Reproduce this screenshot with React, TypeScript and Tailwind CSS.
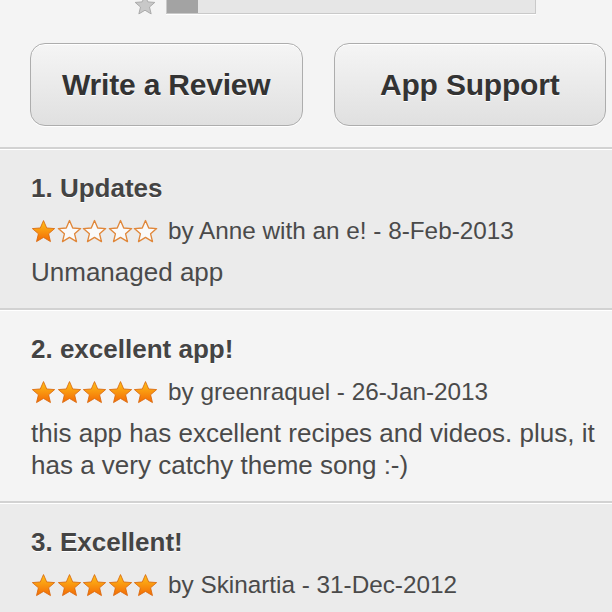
import React from "react"

type Review = {
  title: string
  rating: number
  author: string
  date: string
  body: string
}

const reviews: Review[] = [
  { title: "1. Updates", rating: 1, author: "Anne with an e!", date: "8-Feb-2013", body: "Unmanaged app" },
  {
    title: "2. excellent app!",
    rating: 5,
    author: "greenraquel",
    date: "26-Jan-2013",
    body: "this app has excellent recipes and videos. plus, it has a very catchy theme song :-)",
  },
  { title: "3. Excellent!", rating: 5, author: "Skinartia", date: "31-Dec-2012", body: "" },
]

const STAR = "M12 1.5l3.1 7.1 7.6.6-5.8 5 1.8 7.5L12 17.7l-6.7 4 1.8-7.5-5.8-5 7.6-.6z"

function Star({ filled, id }: { filled: boolean; id: string }) {
  return (
    <svg width="25" height="25" viewBox="0 0 24 24" className="shrink-0">
      <defs>
        <linearGradient id={id} x1="0" y1="0" x2="0" y2="1">
          <stop offset="0" stopColor="#ffc21a" />
          <stop offset="1" stopColor="#f36a05" />
        </linearGradient>
      </defs>
      {filled ? (
        <path d={STAR} fill={`url(#${id})`} stroke="#d8680c" strokeWidth="0.8" strokeLinejoin="round" />
      ) : (
        <path d={STAR} fill="#fafafa" stroke="#e0873a" strokeWidth="1.3" strokeLinejoin="round" />
      )}
    </svg>
  )
}

function Stars({ rating, idx }: { rating: number; idx: number }) {
  return (
    <div className="flex items-center gap-[0.5px]">
      {[0, 1, 2, 3, 4].map((i) => (
        <Star key={i} filled={i < rating} id={`g${idx}-${i}`} />
      ))}
    </div>
  )
}

export default function App() {
  return (
    <div
      className="w-[612px] h-[612px] overflow-hidden bg-[#f4f4f4] text-[#444]"
      style={{ fontFamily: '"Liberation Sans", Arial, sans-serif' }}
    >
      {/* rating histogram, last row */}
      <div className="flex h-[14px] items-end pl-[134px]">
        <svg width="22" height="22" viewBox="0 0 24 24" className="mb-[-2px]">
          <path d={STAR} fill="#c8c8c8" stroke="#a5a5a5" strokeWidth="1" strokeLinejoin="round" />
        </svg>
        <div className="ml-[10px] flex h-[14px] w-[370px] border border-t-0 border-[#c9c9c9] bg-[#e6e6e6] shadow-[0_1px_0_#fff]">
          <div className="w-[31px] bg-[#a3a3a3]" />
        </div>
      </div>

      <div className="flex gap-[31px] pl-[30px] pr-[6px] pt-[29px] pb-[21px]">
        {["Write a Review", "App Support"].map((label) => (
          <button
            key={label}
            className="flex h-[83px] flex-1 items-center justify-center rounded-[15px] border border-[#adadad] bg-gradient-to-b from-[#f5f5f5] to-[#e0e0e0] text-[30px] font-bold tracking-[-0.2px] text-[#333] shadow-[inset_0_1px_0_#fff,0_1px_0_#fff] [text-shadow:0_1px_0_#fff]"
          >
            {label}
          </button>
        ))}
      </div>

      {reviews.map((r, i) => (
        <div
          key={r.title}
          className={`border-t-2 border-[#d2d2d2] pl-[31px] pr-[6px] pt-[19px] pb-[20px] shadow-[inset_0_1px_0_#fff] ${
            i % 2 === 0 ? "bg-[#ebebeb]" : "bg-[#f4f4f4]"
          }`}
        >
          <div className="text-[26px] font-bold leading-[41px] text-[#444] [text-shadow:0_1px_0_#fff]">
            {r.title}
          </div>
          <div className="flex h-[43px] items-center pt-[2px]">
            <Stars rating={r.rating} idx={i} />
            <span className="ml-[10px] text-[24.3px] text-[#4a4a4a]">
              by {r.author} - {r.date}
            </span>
          </div>
          {r.body && (
            <p className="mt-[4px] text-[26px] leading-[32px] text-[#4a4a4a]">{r.body}</p>
          )}
        </div>
      ))}
    </div>
  )
}
